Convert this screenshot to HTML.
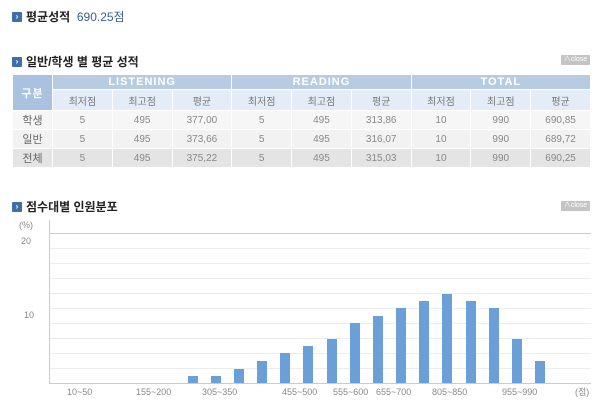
<!DOCTYPE html>
<html><head><meta charset="utf-8"><style>
body{margin:0;width:600px;height:409px;background:#fff;font-family:"Liberation Sans","Noto Sans CJK KR",sans-serif;position:relative;overflow:hidden}
.t{position:absolute;font-size:12px;color:#222;display:flex;align-items:center;font-weight:bold}
.ic{display:inline-block;width:10px;height:10px;background:#3d6fa8;color:#fff;font-size:8px;line-height:10px;text-align:center;margin-right:4px;border-radius:1px}
.close{position:absolute;right:10px;width:29px;height:10px;background:#c4c4c4;color:#fff;font-size:7px;line-height:10px;text-align:center;border-radius:1px}
table{position:absolute;left:12px;top:74px;width:579px;border-collapse:collapse;font-size:10px;color:#888;text-align:center;table-layout:fixed}
td{padding:0;border:1px solid #fff}
.h1 td{height:14px;background:#b7cce3;color:#fff;font-weight:bold;font-size:11px;letter-spacing:1px}
.h2 td{height:20px;background:#e4edf7;color:#777}
td.g{background:#a9c2df;color:#fff;font-weight:bold}
.r td{height:18px;background:#f6f6f6}
.r2 td{background:#f2f2f2}
.r3 td{background:#e4e4e4}
.r td:first-child{color:#666;font-size:11px}
</style></head><body>
<div class="t" style="left:12px;top:8px;font-size:12px"><span class="ic">›</span>평균성적&nbsp;&nbsp;<span style="color:#3a5f8f;font-size:12px;font-weight:normal">690.25점</span></div>
<div class="t" style="left:12px;top:53px"><span class="ic">›</span>일반/학생 별 평균 성적</div>
<div class="close" style="top:55px">∧close</div>
<table>
<colgroup><col style="width:40px"><col span="9"></colgroup>
<tr class="h1"><td class="g" rowspan="2">구분</td><td colspan="3">LISTENING</td><td colspan="3">READING</td><td colspan="3">TOTAL</td></tr>
<tr class="h2"><td>최저점</td><td>최고점</td><td>평균</td><td>최저점</td><td>최고점</td><td>평균</td><td>최저점</td><td>최고점</td><td>평균</td></tr>
<tr class="r"><td>학생</td><td>5</td><td>495</td><td>377,00</td><td>5</td><td>495</td><td>313,86</td><td>10</td><td>990</td><td>690,85</td></tr>
<tr class="r r2"><td>일반</td><td>5</td><td>495</td><td>373,66</td><td>5</td><td>495</td><td>316,07</td><td>10</td><td>990</td><td>689,72</td></tr>
<tr class="r r3"><td>전체</td><td>5</td><td>495</td><td>375,22</td><td>5</td><td>495</td><td>315,03</td><td>10</td><td>990</td><td>690,25</td></tr>
</table>
<div class="t" style="left:12px;top:198px"><span class="ic">›</span>점수대별 인원분포</div>
<div class="close" style="top:201px">∧close</div>
<svg width="600" height="409" style="position:absolute;left:0;top:0" font-family="Liberation Sans, sans-serif" font-size="9" fill="#888">
<g stroke="#ececec" stroke-width="1">
<line x1="49" y1="248.5" x2="591" y2="248.5"/><line x1="49" y1="263.5" x2="591" y2="263.5"/><line x1="49" y1="278.5" x2="591" y2="278.5"/><line x1="49" y1="293.5" x2="591" y2="293.5"/><line x1="49" y1="308.5" x2="591" y2="308.5"/><line x1="49" y1="323.5" x2="591" y2="323.5"/><line x1="49" y1="338.5" x2="591" y2="338.5"/><line x1="49" y1="353.5" x2="591" y2="353.5"/><line x1="49" y1="368.5" x2="591" y2="368.5"/>
</g>
<line x1="49" y1="233.5" x2="591" y2="233.5" stroke="#ccc"/>
<line x1="49.5" y1="220" x2="49.5" y2="384" stroke="#ccc"/>
<line x1="49" y1="383.5" x2="591" y2="383.5" stroke="#ccc"/>
<g fill="#6a9fd8">
<rect x="188" y="376" width="10" height="7"/><rect x="211" y="376" width="10" height="7"/><rect x="234" y="369" width="10" height="14"/><rect x="257" y="361" width="10" height="22"/><rect x="280" y="353" width="10" height="30"/><rect x="303" y="346" width="10" height="37"/><rect x="327" y="339" width="10" height="44"/><rect x="350" y="323" width="10" height="60"/><rect x="373" y="316" width="10" height="67"/><rect x="396" y="308" width="10" height="75"/><rect x="419" y="301" width="10" height="82"/><rect x="442" y="294" width="10" height="89"/><rect x="466" y="301" width="10" height="82"/><rect x="489" y="308" width="10" height="75"/><rect x="512" y="339" width="10" height="44"/><rect x="535" y="361" width="10" height="22"/>
</g>
<text x="19" y="228">(%)</text><text x="21" y="244">20</text><text x="24" y="318">10</text>
<text x="67" y="395">10~50</text><text x="136" y="395">155~200</text><text x="202" y="395">305~350</text><text x="282" y="395">455~500</text><text x="333" y="395">555~600</text><text x="376" y="395">655~700</text><text x="432" y="395">805~850</text><text x="502" y="395">955~990</text><text x="575" y="395">(점)</text>
</svg>
</body></html>
